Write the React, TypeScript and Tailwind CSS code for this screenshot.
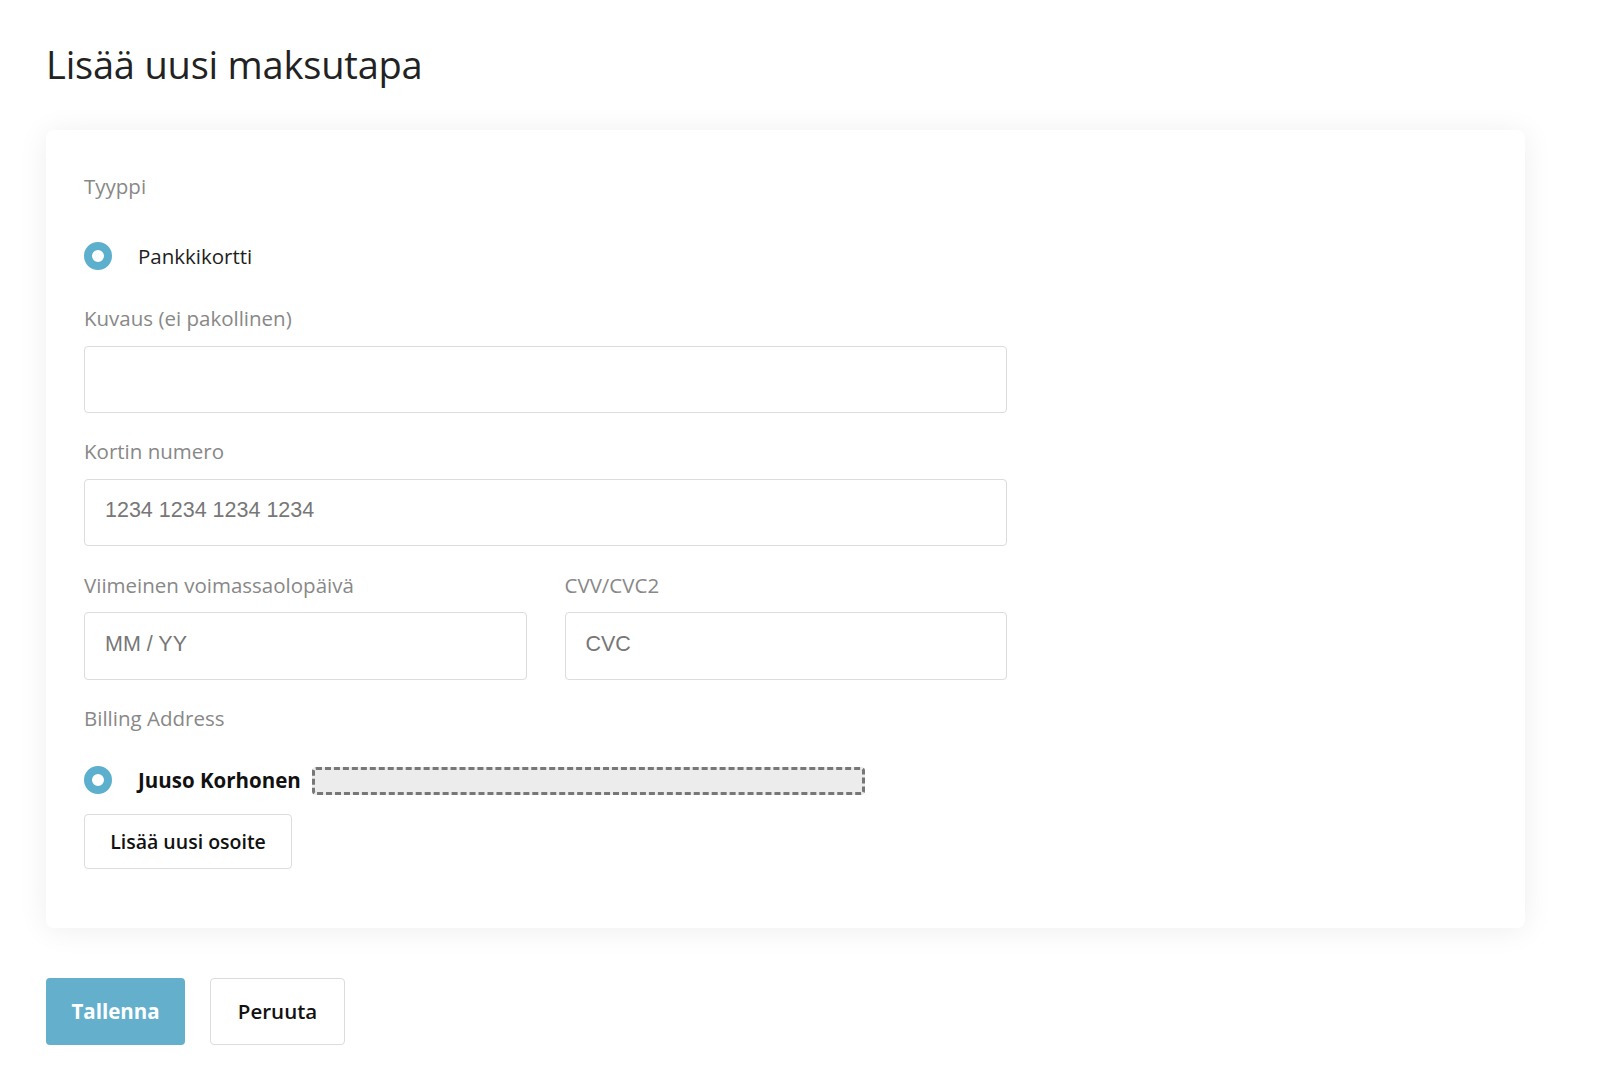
export default function App() {
  return (
    <div className="min-h-screen bg-white pl-[46px] pr-[75px] pt-[38px] pb-10 font-['Open_Sans',sans-serif] text-[#222]">
      <h1 className="text-[38px] leading-[52px] font-normal tracking-[-0.2px]">Lisää uusi maksutapa</h1>

      {/* Form card */}
      <div className="mt-[40px] rounded-lg bg-white px-[38px] pt-[42px] pb-[59px] shadow-[0_2px_30px_rgba(0,0,0,0.07)]">
        <p className="text-[20.5px] leading-7 text-[#888]">Tyyppi</p>

        <label className="mt-[42px] flex items-center gap-[26px]">
          <span className="h-7 w-7 rounded-full border-[8px] border-[#5db0cd] bg-white" />
          <span className="text-[20.5px] leading-7 text-[#1e1e1e]">Pankkikortti</span>
        </label>

        <div className="w-[923px]">
          <p className="mt-[34px] text-[20.5px] leading-7 text-[#888]">Kuvaus (ei pakollinen)</p>
          <input className="mt-[14px] h-[67px] w-full rounded border border-[#dcdcdc] px-5 outline-none" />

          <p className="mt-[24px] text-[20.5px] leading-7 text-[#888]">Kortin numero</p>
          <input
            placeholder="1234 1234 1234 1234"
            className="mt-[14px] h-[67px] w-full rounded border border-[#dcdcdc] px-5 pb-1 font-['Liberation_Sans',sans-serif] text-[21.5px] text-[#333] outline-none placeholder:text-[#777]"
          />

          <div className="mt-[25px] grid grid-cols-2 gap-[38px]">
            <div>
              <p className="text-[20.5px] leading-7 text-[#888]">Viimeinen voimassaolopäivä</p>
              <input
                placeholder="MM / YY"
                className="mt-[13px] h-[68px] w-full rounded border border-[#dcdcdc] px-5 pb-1 font-['Liberation_Sans',sans-serif] text-[21.5px] outline-none placeholder:text-[#777]"
              />
            </div>
            <div>
              <p className="text-[20.5px] leading-7 text-[#888]">CVV/CVC2</p>
              <input
                placeholder="CVC"
                className="mt-[13px] h-[68px] w-full rounded border border-[#dcdcdc] px-5 pb-1 font-['Liberation_Sans',sans-serif] text-[21.5px] outline-none placeholder:text-[#777]"
              />
            </div>
          </div>
        </div>

        <p className="mt-[24px] text-[20.5px] leading-7 text-[#888]">Billing Address</p>

        <label className="mt-[32px] flex items-center">
          <span className="h-7 w-7 rounded-full border-[8px] border-[#5db0cd] bg-white" />
          <span className="ml-[26px] text-[20.5px] leading-7 font-bold text-[#111]">Juuso Korhonen</span>
          <span className="ml-[11px] mt-[3px] h-[28px] w-[553px] rounded-sm border-[3px] border-dashed border-[#777] bg-[#ececec]" />
        </label>

        <button className="mt-[19px] h-[55px] w-[208px] rounded border border-[#dcdcdc] bg-white text-[19.5px] font-semibold text-[#111]">
          Lisää uusi osoite
        </button>
      </div>

      {/* Actions */}
      <div className="mt-[50px] flex gap-[25px]">
        <button className="h-[67px] w-[139px] rounded bg-[#64b0cc] text-[20.5px] font-bold text-white">Tallenna</button>
        <button className="h-[67px] w-[135px] rounded border border-[#dcdcdc] bg-white text-[20.5px] font-semibold text-[#111]">
          Peruuta
        </button>
      </div>
    </div>
  );
}
